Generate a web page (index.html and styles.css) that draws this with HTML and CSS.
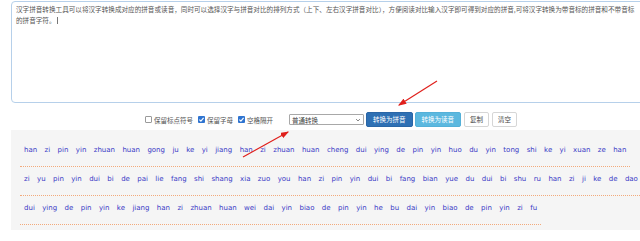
FILE: index.html
```html
<!DOCTYPE html>
<html lang="zh-CN">
<head>
<meta charset="utf-8">
<title>汉字拼音转换</title>
<link rel="stylesheet" href="styles.css">
</head>
<body>
<div class="wrap">
  <div class="editor">汉字拼音转换工具可以将汉字转换成对应的拼音或读音，同时可以选择汉字与拼音对比的排列方式（上下、左右汉字拼音对比），方便阅读对比输入汉字即可得到对应的拼音,可将汉字转换为带音标的拼音和不带音标<br>的拼音字符。<span class="caret"></span></div>

  <div class="toolbar">
    <label class="opt"><span class="box"></span>保留标点符号</label>
    <label class="opt"><span class="box checked"><svg viewBox="0 0 8 8" width="7" height="7"><path d="M1.6 4.2 L3.3 5.8 L6.4 2.2" fill="none" stroke="#fff" stroke-width="1.3"/></svg></span>保留字母</label>
    <label class="opt"><span class="box checked"><svg viewBox="0 0 8 8" width="7" height="7"><path d="M1.6 4.2 L3.3 5.8 L6.4 2.2" fill="none" stroke="#fff" stroke-width="1.3"/></svg></span>空格隔开</label>
    <span class="select">普通转换<svg class="chev" viewBox="0 0 8 8" width="6" height="6"><path d="M1.5 2.8 L4 5.3 L6.5 2.8" fill="none" stroke="#555" stroke-width="1"/></svg></span>
    <button class="btn primary">转换为拼音</button>
    <button class="btn info">转换为读音</button>
    <button class="btn plain">复制</button>
    <button class="btn plain">清空</button>
  </div>

  <div class="result">
    <div class="row"><span>han</span><span>zi</span><span>pin</span><span>yin</span><span>zhuan</span><span>huan</span><span>gong</span><span>ju</span><span>ke</span><span>yi</span><span>jiang</span><span>han</span><span>zi</span><span>zhuan</span><span>huan</span><span>cheng</span><span>dui</span><span>ying</span><span>de</span><span>pin</span><span>yin</span><span>huo</span><span>du</span><span>yin</span><span>tong</span><span>shi</span><span>ke</span><span>yi</span><span>xuan</span><span>ze</span><span>han</span></div>
    <div class="row"><span>zi</span><span>yu</span><span>pin</span><span>yin</span><span>dui</span><span>bi</span><span>de</span><span>pai</span><span>lie</span><span>fang</span><span>shi</span><span>shang</span><span>xia</span><span>zuo</span><span>you</span><span>han</span><span>zi</span><span>pin</span><span>yin</span><span>dui</span><span>bi</span><span>fang</span><span>bian</span><span>yue</span><span>du</span><span>dui</span><span>bi</span><span>shu</span><span>ru</span><span>han</span><span>zi</span><span>ji</span><span>ke</span><span>de</span><span>dao</span></div>
    <div class="row"><span>dui</span><span>ying</span><span>de</span><span>pin</span><span>yin</span><span>ke</span><span>jiang</span><span>han</span><span>zi</span><span>zhuan</span><span>huan</span><span>wei</span><span>dai</span><span>yin</span><span>biao</span><span>de</span><span>pin</span><span>yin</span><span>he</span><span>bu</span><span>dai</span><span>yin</span><span>biao</span><span>de</span><span>pin</span><span>yin</span><span>zi</span><span>fu</span></div>
  </div>
</div>

<svg class="arrows" width="640" height="241" viewBox="0 0 640 241">
  <defs>
    <marker id="ah" markerWidth="7" markerHeight="5" refX="6" refY="2.5" orient="auto" markerUnits="strokeWidth">
      <path d="M0 0 L7 2.5 L0 5 Z" fill="#e0201c"/>
    </marker>
  </defs>
  <line x1="437" y1="81" x2="399" y2="105" stroke="#e0201c" stroke-width="1.2" marker-end="url(#ah)"/>
  <line x1="243" y1="157" x2="288" y2="132" stroke="#e0201c" stroke-width="1.2" marker-end="url(#ah)"/>
</svg>
</body>
</html>
```

FILE: styles.css
```css
html, body {
  margin: 0;
  padding: 0;
  background: #ffffff;
  overflow: hidden;
  width: 640px;
  height: 241px;
}

body {
  position: relative;
  font-family: "Noto Sans CJK SC", "Noto Sans", sans-serif;
  color: #555;
}

.wrap {
  margin-left: 11px;
  width: 640px;
}

.editor {
  box-sizing: border-box;
  margin-top: 1px;
  height: 102px;
  border: 1px solid #b6d0ea;
  border-radius: 4px;
  padding: 2px 4px;
  font-size: 6.6px;
  line-height: 11px;
  color: #555;
  white-space: nowrap;
  overflow: hidden;
}

.caret {
  display: inline-block;
  width: 1px;
  height: 7px;
  background: #777;
  vertical-align: -1px;
  margin-left: 1px;
}

.toolbar {
  display: flex;
  align-items: center;
  height: 15px;
  padding: 9px 0 3px 134px;
  font-size: 6.5px;
  color: #555;
}

.opt {
  display: flex;
  align-items: center;
  margin-right: 5px;
}

.box {
  box-sizing: border-box;
  width: 7px;
  height: 7px;
  border: 1px solid #9a9a9a;
  border-radius: 1px;
  margin-right: 2px;
  background: #fff;
  display: flex;
  align-items: center;
  justify-content: center;
}

.box.checked {
  border: none;
  background: #2f74d0;
}

.box svg {
  display: block;
}

.select {
  box-sizing: border-box;
  margin-left: 11px;
  width: 75px;
  height: 11px;
  border: 1px solid #a8a8a8;
  border-radius: 1px;
  background: #fff;
  display: flex;
  align-items: center;
  justify-content: space-between;
  padding: 0 2px;
  color: #444;
  font-size: 6.5px;
}

.chev {
  display: block;
}

.btn {
  box-sizing: border-box;
  height: 15px;
  margin: 0 0 0 2px;
  padding: 0 6px;
  font-family: "Noto Sans CJK SC", sans-serif;
  font-size: 6.5px;
  line-height: 13px;
  border-radius: 2px;
  border: 1px solid transparent;
  cursor: pointer;
}

.btn.primary {
  background: #2e70b4;
  border-color: #2a66a6;
  color: #fff;
}

.btn.info {
  background: #5bb8df;
  border-color: #54b0d8;
  color: #fff;
}

.btn.plain {
  background: #fff;
  border-color: #d6d6d6;
  color: #444;
  padding: 0 5px;
  margin-left: 3px;
}

.result {
  box-sizing: border-box;
  height: 100px;
  background: #f5f5f5;
  padding: 8px 0 7px 9px;
}

.row {
  display: flex;
  width: fit-content;
  gap: 7.4px;
  padding: 5px 4px 9px;
  border-bottom: 1px dotted #f2aa7c;
  font-family: "DejaVu Sans", Verdana, sans-serif;
  font-size: 7px;
  line-height: 14px;
  color: #3a3ac6;
}

.arrows {
  position: absolute;
  left: 0;
  top: 0;
  pointer-events: none;
}
```
